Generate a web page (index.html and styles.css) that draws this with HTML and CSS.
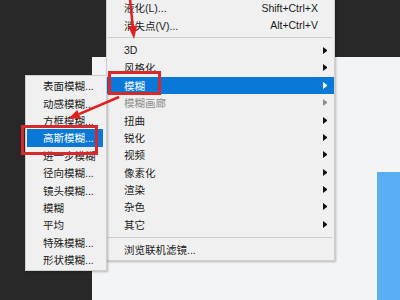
FILE: index.html
```html
<!DOCTYPE html>
<html>
<head>
    <meta charset="utf-8">
    <title>滤镜 - 模糊</title>
    <link rel="stylesheet" href="styles.css">
</head>
<body>
<div class="screen">
    <div class="topbar"></div>
    <div class="work">
        <div class="side"></div>
        <div class="canvas">
            <div class="doc"></div>
        </div>
    </div>

    <div class="menu main-menu">
        <div class="item"><span class="label">液化(L)...</span><span class="key">Shift+Ctrl+X</span><span class="arrow"></span></div>
        <div class="item"><span class="label">消失点(V)...</span><span class="key">Alt+Ctrl+V</span><span class="arrow"></span></div>
        <div class="sep"></div>
        <div class="item more"><span class="label">3D</span><span class="arrow"></span></div>
        <div class="item more"><span class="label">风格化</span><span class="arrow"></span></div>
        <div class="item more active"><span class="label">模糊</span><span class="arrow"></span></div>
        <div class="item more disabled"><span class="label">模糊画廊</span><span class="arrow"></span></div>
        <div class="item more"><span class="label">扭曲</span><span class="arrow"></span></div>
        <div class="item more"><span class="label">锐化</span><span class="arrow"></span></div>
        <div class="item more"><span class="label">视频</span><span class="arrow"></span></div>
        <div class="item more"><span class="label">像素化</span><span class="arrow"></span></div>
        <div class="item more"><span class="label">渲染</span><span class="arrow"></span></div>
        <div class="item more"><span class="label">杂色</span><span class="arrow"></span></div>
        <div class="item more"><span class="label">其它</span><span class="arrow"></span></div>
        <div class="sep"></div>
        <div class="item"><span class="label">浏览联机滤镜...</span><span class="arrow"></span></div>
    </div>

    <div class="menu sub-menu">
        <div class="item"><span class="label">表面模糊...</span></div>
        <div class="item"><span class="label">动感模糊...</span></div>
        <div class="item"><span class="label">方框模糊...</span></div>
        <div class="item active"><span class="label">高斯模糊...</span></div>
        <div class="item"><span class="label">进一步模糊</span></div>
        <div class="item"><span class="label">径向模糊...</span></div>
        <div class="item"><span class="label">镜头模糊...</span></div>
        <div class="item"><span class="label">模糊</span></div>
        <div class="item"><span class="label">平均</span></div>
        <div class="item"><span class="label">特殊模糊...</span></div>
        <div class="item"><span class="label">形状模糊...</span></div>
    </div>

    <div class="mark mark-blur"></div>
    <div class="mark mark-gauss"></div>

    <svg class="arrows" viewBox="0 0 400 300">
        <line x1="130" y1="-1" x2="132.8" y2="27" stroke="#e0201f" stroke-width="2.5"/>
        <polygon points="134,39 137.3,25.6 128.3,26.5" fill="#e0201f"/>
        <line x1="119" y1="97" x2="79" y2="114.2" stroke="#e0201f" stroke-width="2.5"/>
        <polygon points="68,119 80.8,118.3 77.2,110" fill="#e0201f"/>
    </svg>
</div>
</body>
</html>
```

FILE: styles.css
```css
*{
    margin: 0;
    padding: 0;
    box-sizing: border-box;
}
body{
    font-family: "Liberation Sans", "Noto Sans CJK SC", sans-serif;
}
.screen{
    width: 400px;
    height: 300px;
    position: relative;
    overflow: hidden;
    display: grid;
    grid-template-rows: 57px 1fr;
    background-color: #f3f4f6;
}
.topbar{
    background-color: #282828;
}
.work{
    display: grid;
    grid-template-columns: 92px 1fr;
}
.side{
    background-color: #282828;
}
.canvas{
    display: flex;
    justify-content: flex-end;
    padding-top: 115px;
}
.doc{
    width: 23px;
    background-color: #5aaef4;
}

/* popup menus */
.menu{
    position: absolute;
    background-color: #f0f0f0;
    border: 1px solid #cfcfcf;
    box-shadow: 1px 1px 2px rgba(0, 0, 0, 0.25);
    font-size: 10.5px;
    color: #1b1b1b;
}
.main-menu{
    left: 106px;
    top: -4px;
    width: 229px;
    padding: 2px 0;
}
.sub-menu{
    left: 25px;
    top: 75px;
    width: 82px;
    padding: 1px 0 2px;
}
.item{
    height: 17.4px;
    display: flex;
    align-items: center;
    padding-left: 17px;
    white-space: nowrap;
}
.main-menu .item{
    padding-right: 7px;
}
.label{
    flex: 1;
}
.key{
    flex-shrink: 0;
    margin-right: 1px;
}
.arrow{
    flex-shrink: 0;
    width: 8px;
    height: 7px;
    display: flex;
    justify-content: flex-end;
}
.more .arrow::after{
    content: "";
    border-left: 4px solid #111;
    border-top: 3.5px solid transparent;
    border-bottom: 3.5px solid transparent;
}
.active{
    background-color: #0a78d7;
    color: #fff;
}
.more.active .arrow::after{
    border-left-color: #fff;
}
.disabled{
    color: #8d8d8d;
}
.more.disabled .arrow::after{
    border-left-color: #8d8d8d;
}
.sub-menu .active{
    margin: 0 3px 0 1px;
    padding-left: 16px;
}
.sep{
    height: 1px;
    background-color: #cdcdcd;
    margin: 3.5px 2px 3.5px 1px;
}

/* red annotations */
.mark{
    position: absolute;
    border: 3px solid #d8282c;
}
.mark-blur{
    left: 108px;
    top: 71px;
    width: 53px;
    height: 24px;
}
.mark-gauss{
    left: 21px;
    top: 125px;
    width: 77px;
    height: 30px;
}
.arrows{
    position: absolute;
    left: 0;
    top: 0;
    width: 400px;
    height: 300px;
}
```
